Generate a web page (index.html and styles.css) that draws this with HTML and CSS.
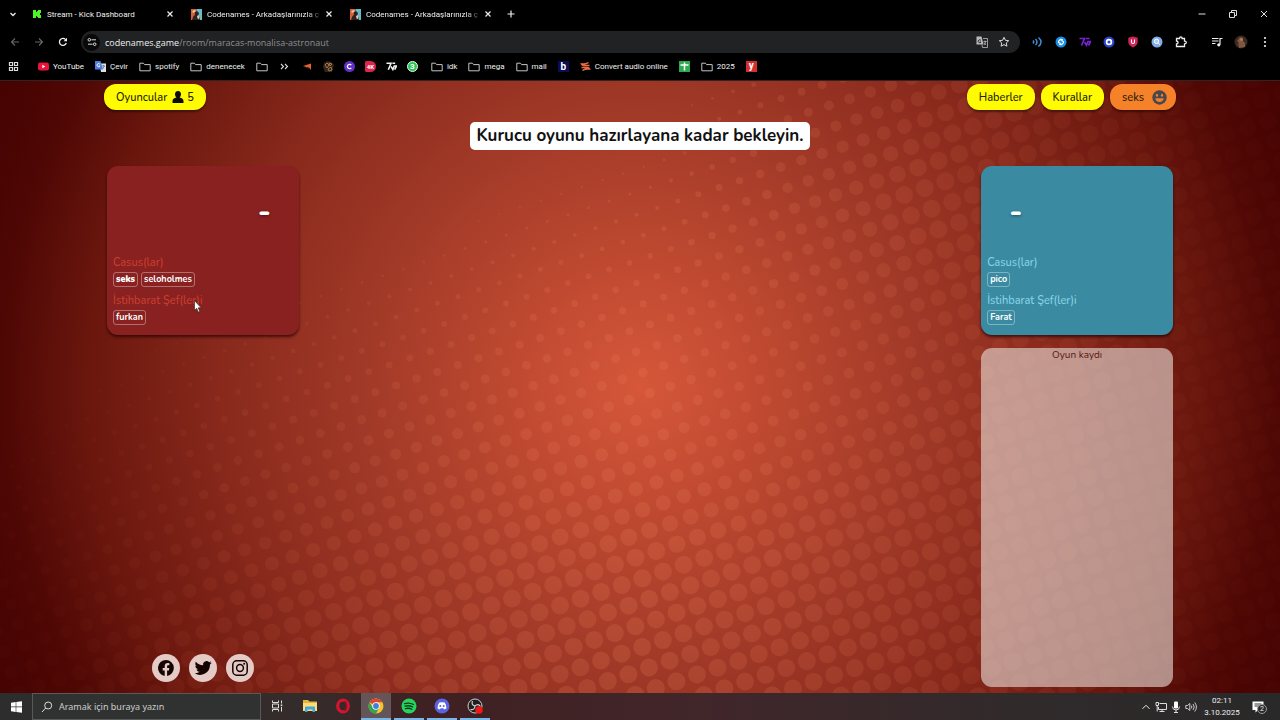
FILE: index.html
```
<!DOCTYPE html>
<html lang="tr">
<head>
  <meta charset="UTF-8" />
  <title>Codenames - Arkadaşlarınızla çevrimiçi oynayın</title>
  <link rel="stylesheet" href="styles.css">
</head>
<body>
  <!-- Shared icons -->
  <svg width="0" height="0" class="defs" aria-hidden="true">
    <symbol id="folder" viewBox="0 0 12 12"><path d="M.8 2.2h3.6l1.2 1.4h5.6v6.2H.8z" fill="none" stroke="#c4c4c4" stroke-linejoin="round"/></symbol>
    <symbol id="close" viewBox="0 0 10 10"><path d="M2.5 2.5l5 5m0-5l-5 5" fill="none" stroke="#eee" stroke-width="1.2"/></symbol>
    <symbol id="agents" viewBox="0 0 11 11">
      <path d="M0 0h5.5v11H0z" fill="#d8603c"/><path d="M5.500 0H11v11H5.500z" fill="#67bccb"/>
      <path d="M1 11l1.500-4L4 6 3.500 3.500 6 2l2 2-.5 2L9 11z" fill="#302020"/>
      <path d="M1 3l2-2 2 .5-2 2.500zM6 7l2-1v4l-1.500-.5z" fill="#f0c890"/>
    </symbol>
  </svg>

  <header class="browser">
    <div class="tabs">
      <button class="tabMenu" aria-label="Sekmelerde ara"><svg width="10" height="10" viewBox="0 0 10 10"><path d="M2.5 4L5 6.5 7.5 4" fill="none" stroke="#eee" stroke-width="1.3"/></svg></button>
      <div class="tab">
        <svg width="10" height="10" viewBox="0 0 10 10"><path d="M1 1h3v2h1V2h1V1h3v3H8v2h1v3H6V8H5V7H4v2H1z" fill="#4df527"/></svg>
        <span class="tabTitle">Stream - Kick Dashboard</span>
        <button aria-label="Kapat"><svg width="10" height="10"><use href="#close"/></svg></button>
      </div>
      <div class="tab">
        <svg width="11" height="11"><use href="#agents"/></svg>
        <span class="tabTitle fade">Codenames - Arkadaşlarınızla ç</span>
        <button aria-label="Kapat"><svg width="10" height="10"><use href="#close"/></svg></button>
      </div>
      <div class="tab">
        <svg width="11" height="11"><use href="#agents"/></svg>
        <span class="tabTitle fade">Codenames - Arkadaşlarınızla ç</span>
        <button aria-label="Kapat"><svg width="10" height="10"><use href="#close"/></svg></button>
      </div>
      <button class="newTab" aria-label="Yeni sekme"><svg width="10" height="10" viewBox="0 0 10 10"><path d="M5 1.5v7M1.5 5h7" stroke="#eee" stroke-width="1.2"/></svg></button>
      <div class="windowButtons">
        <button aria-label="Küçült"><svg width="10" height="10" viewBox="0 0 10 10"><path d="M1.5 5h7" stroke="#ddd"/></svg></button>
        <button aria-label="Önceki boyut"><svg width="10" height="10" viewBox="0 0 10 10"><path d="M1.5 3.5h5v5h-5zM3.5 3V1.5h5v5H7" fill="none" stroke="#ddd"/></svg></button>
        <button aria-label="Pencereyi kapat"><svg width="10" height="10" viewBox="0 0 10 10"><path d="M2 2l6 6m0-6L2 8" stroke="#ddd"/></svg></button>
      </div>
    </div>

    <div class="toolbar">
      <div class="nav">
        <button aria-label="Geri"><svg width="10" height="10" viewBox="0 0 10 10"><path d="M9 5H1.5M5 1.5L1.5 5 5 8.5" fill="none" stroke="#686868" stroke-width="1.1"/></svg></button>
        <button aria-label="İleri"><svg width="10" height="10" viewBox="0 0 10 10"><path d="M1 5h7.500M5 1.500L8.500 5 5 8.500" fill="none" stroke="#686868" stroke-width="1.1"/></svg></button>
        <button aria-label="Yenile"><svg width="10" height="10" viewBox="0 0 10 10"><path d="M8.300 6A3.500 3.500 0 1 1 7.600 2.600" fill="none" stroke="#eee" stroke-width="1.3"/><path d="M9 .8v3.400H5.600z" fill="#eee"/></svg></button>
      </div>
      <div class="address">
        <span class="siteInfo"><svg width="10" height="10" viewBox="0 0 10 10"><g fill="none" stroke="#ddd"><circle cx="2.300" cy="2.800" r="1.300"/><path d="M4.500 2.800h4.500M1 7.200h4.500"/><circle cx="7.700" cy="7.200" r="1.300"/></g></svg></span>
        <a href="#" class="url"><b>codenames.game</b>/room/maracas-monalisa-astronaut</a>
        <button aria-label="Çevir"><svg width="12" height="12" viewBox="0 0 12 12"><path d="M.5.5h5l2 8h-7z" fill="#bbb"/><path d="M5 4.500A1.500 1.500 0 1 0 5 6H3.800" fill="none" stroke="#222" stroke-width=".9"/><path d="M7 2.500h4.500v9h-5L6 9M7.500 5.500h3M9 4.500v1M8 9l2-3.500M8 6.500L10 9" fill="none" stroke="#bbb" stroke-width=".8"/></svg></button>
        <button aria-label="Yer işareti ekle"><svg width="12" height="12" viewBox="0 0 12 12"><path d="M6 1.300l1.400 3 3.300.4-2.400 2.200.6 3.300L6 8.600l-2.900 1.600.6-3.300L1.300 4.700l3.300-.4z" fill="none" stroke="#ddd"/></svg></button>
      </div>
      <div class="extensions">
        <button aria-label="Ses"><svg width="12" height="12" viewBox="0 0 12 12"><path d="M2 4.500q1.500 1.500 0 3M4.500 3q3 3 0 6M7.500 1.500q5 4.500 0 9" fill="none" stroke="#3c8fd6" stroke-width="1.500"/></svg></button>
        <button aria-label="Shazam"><svg width="12" height="12" viewBox="0 0 12 12"><circle cx="6" cy="6" r="5.500" fill="#1a90e8"/><path d="M7.800 3.800Q6 2.800 4.300 4.400T4.500 7L6 7.500M4.200 8.200Q6 9.200 7.700 7.600T7.500 5L6 4.500" fill="none" stroke="#fff" stroke-width="1.300"/></svg></button>
        <button aria-label="7TV"><svg width="12" height="12" viewBox="0 0 12 12"><path d="M.5 2.500h5L2.500 9.500M7 2.500h3.500M5.500 6l2 3.200L9 5.500h2.500L9.500 9.500" fill="none" stroke="#7a22d8" stroke-width="1.700"/></svg></button>
        <button aria-label="Kayıt"><svg width="12" height="12" viewBox="0 0 12 12"><circle cx="6" cy="6" r="5.500" fill="#2b44c9"/><circle cx="6" cy="6" r="2.400" fill="none" stroke="#fff" stroke-width="1.700"/></svg></button>
        <button aria-label="Koruma"><svg width="12" height="12" viewBox="0 0 12 12"><path d="M6 .5l4.700 1.300v4Q10.700 9.500 6 11.500 1.300 9.500 1.300 5.800v-4z" fill="#cf265c"/><path d="M4.500 3.500V6a1.500 1.500 0 0 0 3 0V3.500" fill="none" stroke="#fff" stroke-width="1.100"/></svg></button>
        <button aria-label="Arama"><svg width="12" height="12" viewBox="0 0 12 12"><circle cx="6" cy="6" r="5.500" fill="#80aee9"/><circle cx="5.500" cy="5.300" r="2.200" fill="#acccf5" stroke="#fff"/><path d="M7.200 7l1.800 1.800" stroke="#fff"/></svg></button>
        <button aria-label="Uzantılar"><svg width="12" height="12" viewBox="0 0 12 12"><path d="M1.500 2.500h3q0-1.500 1.300-1.500t1.300 1.500h2.400v2.700q1.800 0 1.800 1.300T9.500 7.800v2.700h-8V8Q3 8 3 6.500T1.500 5z" fill="none" stroke="#eee" stroke-width="1.300"/></svg></button>
        <button class="media" aria-label="Medya"><svg width="12" height="12" viewBox="0 0 12 12"><path d="M1 2.500h6.500M1 5h6.500M1 7.500h3.500M9 8.500v-6h2.500" fill="none" stroke="#eee" stroke-width="1.200"/><circle cx="7.800" cy="8.800" r="1.600" fill="#eee"/></svg></button>
        <button aria-label="Profil"><svg width="14" height="14" viewBox="0 0 14 14"><circle cx="7" cy="7" r="6.500" fill="#3b2a22"/><path d="M5 13V8L3 6l3-4 3 1v3l2 2v4z" fill="#80583f"/><circle cx="7.500" cy="4.500" r="1.500" fill="#a77c60"/><path d="M3 9l2-1v4z" fill="#73382e"/></svg></button>
        <button aria-label="Menü"><svg width="12" height="12" viewBox="0 0 12 12" fill="#eee"><circle cx="6" cy="2" r="1.100"/><circle cx="6" cy="6" r="1.100"/><circle cx="6" cy="10" r="1.100"/></svg></button>
      </div>
    </div>

    <nav class="bookmarks">
      <button class="apps" aria-label="Uygulamalar"><svg width="11" height="11" viewBox="0 0 11 11"><path d="M1.500 1.500h3v3h-3zM6.500 1.500h3v3h-3zM1.500 6.500h3v3h-3zM6.500 6.500h3v3h-3z" fill="none" stroke="#ddd" stroke-width="1.200"/></svg></button>
      <a href="#"><svg width="11" height="11" viewBox="0 0 11 11"><rect y="1.500" width="11" height="8" rx="2" fill="#e8143c"/><path d="M4.300 3.800v3.400L7.300 5.500z" fill="#fff"/></svg>YouTube</a>
      <a href="#"><svg width="11" height="11" viewBox="0 0 11 11"><path d="M4.500 2.500H11V11H6z" fill="#dde1e6"/><path d="M0 0h5.500L8 8.500H0z" fill="#4c7ee0"/><path d="M5 3.300A1.600 1.600 0 1 0 5 5H3.600" fill="none" stroke="#fff" stroke-width=".9"/><path d="M7 5h3M8.500 4v1M7.500 8l2-3" stroke="#667" stroke-width=".8"/></svg>Çevir</a>
      <a href="#"><svg width="12" height="12"><use href="#folder"/></svg>spotify</a>
      <a href="#"><svg width="12" height="12"><use href="#folder"/></svg>denenecek</a>
      <a href="#" aria-label="Klasör"><svg width="12" height="12"><use href="#folder"/></svg></a>
      <a href="#" aria-label="Diğer"><svg width="11" height="11" viewBox="0 0 11 11"><path d="M2 3l2.500 2.500L2 8M6 3l2.500 2.500L6 8" fill="none" stroke="#ddd" stroke-width="1.100"/></svg></a>
      <div class="iconLinks">
        <a href="#" aria-label="Ok"><svg width="11" height="11" viewBox="0 0 11 11"><path d="M1 5l8-2.500V9L7.500 7z" fill="#e2632b"/><path d="M2 6h4l1 2z" fill="#402015"/></svg></a>
        <a href="#" aria-label="Harita"><svg width="11" height="11" viewBox="0 0 11 11"><path d="M1 2l3-2 4 1 3 3-2 7H2L0 6z" fill="#33251c"/><path d="M2 4l2-2 2 2-2 3zM6 2l3 1-2 2zM5 8l3-2 1 3-3 1z" fill="none" stroke="#a37844"/></svg></a>
        <a href="#" aria-label="C"><svg width="11" height="11" viewBox="0 0 11 11"><circle cx="5.500" cy="5.500" r="5.500" fill="#6030c8"/><path d="M7.300 4.100a2.200 2.200 0 1 0 0 2.800" fill="none" stroke="#fff" stroke-width="1.300"/></svg></a>
        <a href="#" class="badge4k"><span>4K</span></a>
        <a href="#" aria-label="7TV"><svg width="11" height="11" viewBox="0 0 12 12"><path d="M.5 2.500h5L2.500 9.500M7 2.500h3M5.500 6l2 3.200L9 5.500h2.500L9.500 9.500" fill="none" stroke="#f3f3f3" stroke-width="1.700"/></svg></a>
        <a href="#" class="whatsapp"><span>3</span></a>
      </div>
      <a href="#"><svg width="12" height="12"><use href="#folder"/></svg>idk</a>
      <a href="#"><svg width="12" height="12"><use href="#folder"/></svg>mega</a>
      <a href="#"><svg width="12" height="12"><use href="#folder"/></svg>mail</a>
      <a href="#" class="letterB"><span>b</span></a>
      <a href="#"><svg width="11" height="11" viewBox="0 0 11 11"><path d="M9.500 4.500H4Q2 4.500 1.500 3 6 3.500 8.500 1.500M1.500 6.500H7q2 0 2.500 1.500Q5 7.500 2.500 9.500" fill="none" stroke="#eb6d43" stroke-width="1.600"/></svg>Convert audio online</a>
      <a href="#" aria-label="E-Tablolar"><svg width="11" height="11" viewBox="0 0 11 11"><path d="M0 0h11v11H0z" fill="#2da94f"/><path d="M1.500 4h8M5.500 1.500v8" stroke="#fff" stroke-width="1.500"/></svg></a>
      <a href="#"><svg width="12" height="12"><use href="#folder"/></svg>2025</a>
      <a href="#" class="letterY"><span>y</span></a>
    </nav>
  </header>

  <main class="game">
    <svg id="dots" viewBox="0 0 1280 613" preserveAspectRatio="xMidYMid slice" aria-hidden="true"></svg>

    <div class="room">
      <div class="topBar">
        <button class="pill">Oyuncular
          <svg width="12" height="12" viewBox="0 0 12 12"><path d="M6 0c2 0 3 1.400 3 3.200C9 4.800 8.200 6 7.500 6.500c2.500.5 4 1.500 4 3.500v2H.5v-2c0-2 1.500-3 4-3.500C3.800 6 3 4.800 3 3.200 3 1.400 4 0 6 0z" fill="#0d0c04"/></svg>
          <span>5</span>
        </button>
        <div class="topRight">
          <button class="pill">Haberler</button>
          <button class="pill">Kurallar</button>
          <button class="pill user">seks
            <svg width="15" height="15" viewBox="0 0 15 15"><circle cx="7.500" cy="7.500" r="7.200" fill="#48484c"/><path d="M3.300 8.200h8.400q-.7 3.800-4.200 3.800T3.300 8.200z" fill="#f08030"/><ellipse cx="5" cy="5.300" rx="1.100" ry="1.500" fill="#f08030"/><ellipse cx="10" cy="5.300" rx="1.100" ry="1.500" fill="#f08030"/></svg>
          </button>
        </div>
      </div>

      <h1>Kurucu oyunu hazırlayana kadar bekleyin.</h1>

      <div class="board">
        <div class="column">
          <section class="team red">
            <div class="score">-</div>
            <h2>Casus(lar)</h2>
            <div class="players"><span class="player me">seks</span><span class="player">seloholmes</span></div>
            <h2>İstihbarat Şef(ler)i</h2>
            <div class="players"><span class="player">furkan</span></div>
            <svg class="cursor" width="8" height="13" viewBox="0 0 8 13"><path d="M.5.7v9.600l2.200-2 1.500 3.800 1.600-.7-1.600-3.600h3z" fill="#fff" stroke="#222" stroke-width=".6"/></svg>
          </section>
          <div class="social">
            <a href="#" aria-label="Facebook"><svg width="18" height="18" viewBox="0 0 18 18"><path d="M9 1a8 8 0 0 0-1.300 15.900v-5.500h-2V9h2V7.200c0-2.100 1.200-3.200 3-3.200.9 0 1.700.2 1.700.2v2h-1c-1 0-1.300.6-1.300 1.200V9h2.200l-.4 2.400h-1.800v5.500A8 8 0 0 0 9 1z" fill="#140503"/></svg></a>
            <a href="#" aria-label="Twitter"><svg width="18" height="18" viewBox="0 0 24 24"><path d="M23.600 4.900c-.8.400-1.700.6-2.600.7 1-.6 1.700-1.500 2-2.500-.9.500-1.900.9-2.900 1.100a4.700 4.700 0 0 0-8 4.200C8.200 8.200 4.800 6.400 2.500 3.500a4.700 4.700 0 0 0 1.400 6.200c-.7 0-1.500-.2-2.100-.6 0 2.200 1.600 4.200 3.700 4.700-.7.200-1.400.2-2.100.1.600 1.800 2.300 3.200 4.400 3.200A9.400 9.400 0 0 1 .9 19 13.300 13.300 0 0 0 21.300 7.200c.9-.6 1.700-1.400 2.300-2.300z" fill="#140503"/></svg></a>
            <a href="#" aria-label="Instagram"><svg width="18" height="18" viewBox="0 0 18 18"><g fill="none" stroke="#140503" stroke-width="1.500"><rect x="1.800" y="1.800" width="14.400" height="14.400" rx="4"/><circle cx="9" cy="9" r="3.400"/></g><circle cx="13.200" cy="4.800" r="1" fill="#140503"/></svg></a>
          </div>
        </div>

        <div class="column">
          <section class="team blue">
            <div class="score">-</div>
            <h2>Casus(lar)</h2>
            <div class="players"><span class="player">pico</span></div>
            <h2>İstihbarat Şef(ler)i</h2>
            <div class="players"><span class="player">Farat</span></div>
          </section>
          <section class="log">Oyun kaydı</section>
        </div>
      </div>
    </div>
  </main>

  <footer class="taskbar">
    <button class="start" aria-label="Başlat"><svg width="11" height="12" viewBox="0 0 11 12"><path d="M0 1.800l4.700-.7v4.500H0zM5.300 1L11 .2v5.400H5.300zM0 6.300h4.700v4.600L0 10.200zM5.300 6.300H11v5.500L5.300 11z" fill="#fff"/></svg></button>
    <label class="search">
      <svg width="12" height="12" viewBox="0 0 12 12"><circle cx="7.200" cy="4.500" r="3.500" fill="none" stroke="#ddd"/><path d="M4.700 7L1 11" stroke="#ddd"/></svg>
      <input type="text" placeholder="Aramak için buraya yazın" aria-label="Aramak için buraya yazın" />
    </label>
    <div class="pinned">
      <button aria-label="Görev görünümü"><svg width="12" height="12" viewBox="0 0 12 12"><path d="M1.500.5v2h6v-2M1.500 11.500v-2h6v2M1.500 4h6v4h-6zM10.500.5v3M10.500 7v4.500" fill="none" stroke="#ddd"/><path d="M9.700 4.500h1.600v1.700H9.700z" fill="#ddd"/></svg></button>
      <button aria-label="Dosya Gezgini"><svg width="16" height="16" viewBox="0 0 16 16"><path d="M1 2h5l1.500 1.500H15V13H1z" fill="#e6b43c"/><path d="M1 5h14v8H1z" fill="#fbdc78"/><path d="M3 14V9.500q0-1 1-1h8q1 0 1 1V14h-2.500v-2.500h-5V14z" fill="#46a5d8"/></svg></button>
      <button aria-label="Opera"><svg width="16" height="16" viewBox="0 0 16 16"><ellipse cx="8" cy="8" rx="5.300" ry="5.800" fill="none" stroke="#d6142f" stroke-width="3.200"/><path d="M10 3q3 5 0 10" fill="none" stroke="#8c1224" stroke-width="1.500"/></svg></button>
      <button class="running active" aria-label="Chrome"><svg width="16" height="16" viewBox="0 0 16 16"><circle cx="8" cy="8" r="7.500" fill="#f6c52c"/><path d="M8 8L1.500 4.250A7.500 7.500 0 0 1 14.500 4.250H8z" fill="#df4534"/><path d="M1.500 4.250A7.500 7.500 0 0 0 8 15.500l3.200-5.600H5z" fill="#30a552"/><circle cx="8" cy="8" r="3.700" fill="#fff"/><circle cx="8" cy="8" r="2.900" fill="#3f7ee8"/></svg></button>
      <button class="running" aria-label="Spotify"><svg width="16" height="16" viewBox="0 0 16 16"><circle cx="8" cy="8" r="7.500" fill="#24d45f"/><path d="M3.500 5.600q5-1.400 9 .9M4 8.200q4.300-1.200 7.700.8M4.500 10.600q3.600-.9 6.300.7" fill="none" stroke="#10371d" stroke-width="1.300" stroke-linecap="round"/></svg></button>
      <button class="running" aria-label="Discord"><svg width="16" height="16" viewBox="0 0 16 16"><circle cx="8" cy="8" r="7.500" fill="#5864e0"/><path d="M5.300 4.600q2.700-.8 5.400 0 1.800 2.600 1.800 5.600-1 .9-2.400 1.200l-.7-1.100H6.600l-.7 1.100q-1.400-.3-2.400-1.200 0-3 1.800-5.600z" fill="#fff"/><circle cx="6.300" cy="8" r="1" fill="#5864e0"/><circle cx="9.700" cy="8" r="1" fill="#5864e0"/></svg></button>
      <button class="running" aria-label="OBS"><svg width="16" height="16" viewBox="0 0 16 16"><circle cx="8" cy="8" r="7" fill="#211e20" stroke="#cfcfcf"/><path d="M8 8Q4 7 5.500 3M8 8q3-3 5.500.5M8 8q-.500 4.500-4.500 3.500" fill="none" stroke="#cfcfcf" stroke-width="1.200"/><circle cx="12" cy="12" r="3.800" fill="#f01818"/></svg></button>
    </div>
    <div class="tray">
      <svg width="10" height="10" viewBox="0 0 10 10"><path d="M1.500 6.800L5 3.300l3.500 3.500" fill="none" stroke="#eee"/></svg>
      <svg width="12" height="12" viewBox="0 0 12 12"><path d="M4.500 2.500h7v6h-8V6M7 8.500v2M4.500 10.500h5M1 1.500h2.500v3H1zM2.200 4.500v6" fill="none" stroke="#ddd"/></svg>
      <svg width="10" height="12" viewBox="0 0 10 12"><rect x="3" y=".5" width="4" height="7" rx="1" fill="#fff"/><path d="M1.500 5.500Q1.500 9 5 9t3.500-3.500M5 9v2.500M3 11.500h4" fill="none" stroke="#ddd"/></svg>
      <svg width="12" height="12" viewBox="0 0 12 12"><path d="M.8 4.500h1.700l2.300-2v7l-2.300-2H.8zM6.300 4.500q1.200 1.500 0 3M8 3q2.500 3 0 6M9.700 1.500q3.500 4.500 0 9" fill="none" stroke="#ddd" stroke-width=".9"/></svg>
      <div class="clock"><span>02:11</span><span>3.10.2025</span></div>
      <button class="notes" aria-label="Bildirimler"><svg width="12" height="12" viewBox="0 0 12 12"><path d="M.5.500h11v8.500H6L3.500 11.500V9h-3z" fill="#fff"/><path d="M2.500 3h7M2.500 5h7" stroke="#333"/></svg><span>2</span></button>
    </div>
  </footer>

  <script>
    const dots = document.getElementById('dots');

    // Dots grow towards the bottom and the right edge, and shrink near the glow
    function dotRadius(x, y) {
      let r = 3 + 0.009 * (x - 440) + 0.023 * (y - 240);
      const upper = Math.min(1, Math.max(0, (270 - y) / 150));
      r += Math.max(0, x - 650) * 0.02 * upper;
      r -= 3 * Math.exp(-((x - 810) ** 2 + (y - 370) ** 2) / 40000);
      return Math.min(9, r);
    }

    for (let i = -50; i < 50; i++) {
      for (let j = -50; j < 50; j++) {
        const x = 574 + i * 20.6 + j * 6.8;
        const y = 429 - i * 6.8 + j * 20.6;
        const r = dotRadius(x, y);
        if (r < 1 || x < -10 || x > 1290 || y < -10 || y > 623) continue;
        const dot = document.createElementNS('http://www.w3.org/2000/svg', 'circle');
        dot.setAttribute('cx', x.toFixed(1));
        dot.setAttribute('cy', y.toFixed(1));
        dot.setAttribute('r', r.toFixed(1));
        dot.setAttribute('opacity', Math.max(0.1, 1 - Math.abs(x - 640) / 640).toFixed(2));
        dots.appendChild(dot);
      }
    }
  </script>
</body>
</html>
```
FILE: styles.css
```
* {
  box-sizing: border-box;
}

body {
  margin: 0;
  min-height: 100vh;
  display: flex;
  flex-direction: column;
  background-color: #000;
  color: #f0f0f0;
  font-family: "Segoe UI", Roboto, sans-serif;
  font-size: 8px;
}

svg {
  flex: none;
  display: block;
}

button {
  font: inherit;
  color: inherit;
  background: none;
  border: none;
  padding: 0;
  cursor: pointer;
}

a {
  color: inherit;
  text-decoration: none;
}

.defs {
  position: absolute;
}

/* Browser */
.tabs {
  display: flex;
  align-items: center;
  height: 28px;
}

.tabMenu {
  display: grid;
  place-items: center;
  width: 25px;
}

.tab {
  display: flex;
  align-items: center;
  gap: 5px;
  width: 159px;
  padding: 0 9px 0 7px;
}

.tabTitle {
  flex: 1;
  overflow: hidden;
  white-space: nowrap;
}

.fade {
  mask-image: linear-gradient(to right, #000 100px, transparent 116px);
}

.newTab {
  margin-left: 4px;
}

.windowButtons {
  display: flex;
  gap: 21px;
  margin-left: auto;
  padding-right: 11px;
}

.toolbar {
  display: flex;
  align-items: center;
  height: 28px;
}

.nav {
  display: flex;
  gap: 14px;
  padding: 0 13px 0 10px;
}

.address {
  flex: 1;
  display: flex;
  align-items: center;
  gap: 10px;
  height: 22px;
  padding: 0 10px 0 2px;
  border-radius: 11px;
  background-color: #202224;
}

.siteInfo {
  display: grid;
  place-items: center;
  width: 17px;
  height: 17px;
  border-radius: 50%;
  background-color: #090909;
}

.url {
  flex: 1;
  margin-left: -5px;
  font-family: "Segoe UI", "Open Sans", sans-serif;
  font-size: 9px;
  color: #8c8f92;
}

.url b {
  font-weight: 500;
  color: #f0f0f0;
}

.extensions {
  display: flex;
  padding: 0 3px 0 5px;
}

.extensions button {
  display: grid;
  place-items: center;
  width: 24px;
}

.extensions .media {
  margin-left: 12px;
}

.bookmarks {
  display: flex;
  align-items: center;
  gap: 11px;
  height: 24px;
  padding: 0 8px 3px;
}

.bookmarks a {
  display: flex;
  align-items: center;
  gap: 4px;
  white-space: nowrap;
}

.bookmarks .apps {
  margin-right: 8px;
}

.iconLinks {
  display: flex;
  gap: 10px;
  padding: 0 2px 0 1px;
}

.badge4k span,
.whatsapp span,
.letterB span,
.letterY span {
  width: 11px;
  height: 11px;
  line-height: 11px;
  text-align: center;
  font-weight: bold;
  color: #fff;
}

.badge4k span {
  font-size: 6px;
  background-color: #df244d;
  border-radius: 2px 6px 6px 2px;
}

.whatsapp span {
  background-color: #2ac653;
  border: 1px solid #e8f8ec;
  border-radius: 50%;
  line-height: 9px;
}

.letterB span {
  background-color: #0c0b55;
  font-size: 10px;
}

.letterY span {
  background-color: #d52e2e;
  font-size: 10px;
  line-height: 9px;
}

/* Game */
.game {
  position: relative;
  flex: 1;
  display: flex;
  border-top: 1px solid #38201e;
  background: radial-gradient(circle at 50% 50%, #d6573a 0, #c04a31 120px, #a23a28 270px, #88291c 420px, #6b170e 550px, #4e0704 640px, #430201 720px);
  font-family: Nunito, "Open Sans", sans-serif;
}

#dots {
  position: absolute;
  inset: 0;
  width: 100%;
  height: 100%;
  fill: rgba(236, 128, 92, 0.21);
}

.room {
  position: relative;
  flex: 1;
  display: flex;
  flex-direction: column;
  max-width: 1072px;
  margin: 0 auto;
  padding: 3px 0 6px;
}

.topBar,
.topRight {
  display: flex;
  justify-content: space-between;
  gap: 6px;
}

.pill {
  display: flex;
  align-items: center;
  gap: 5px;
  height: 26px;
  padding: 0 12px;
  border-radius: 12px;
  background-color: #fffb00;
  box-shadow: 0 2px 2px rgba(0, 0, 0, 0.4);
  color: #23200a;
  font-size: 11px;
  font-weight: 500;
}

.pill span {
  margin-left: -2px;
}

.user {
  gap: 8px;
  padding: 0 9px 0 12px;
  background-color: #f58229;
}

h1 {
  align-self: center;
  margin: 12px 0 16px;
  padding: 0 6px;
  border-radius: 5px;
  background-color: #fff;
  color: #111;
  font-size: 17px;
  font-weight: 700;
  line-height: 28px;
}

.board {
  flex: 1;
  display: flex;
  justify-content: space-between;
  padding: 0 3px;
}

.column {
  display: flex;
  flex-direction: column;
  gap: 13px;
  width: 18%;
}

.team {
  position: relative;
  display: flex;
  flex-direction: column;
  padding: 24px 6px 10px;
  border-radius: 11px;
  box-shadow: 0 2px 3px rgba(30, 0, 0, 0.7);
}

.red {
  background-color: #88211f;
}

.blue {
  background-color: #3a8aa2;
}

.score {
  height: 65px;
  padding: 0 22px;
  color: #fff;
  font-size: 30px;
  font-weight: 800;
  line-height: 44px;
  text-shadow: 0 1px 3px rgba(0, 0, 0, 0.4);
}

.red .score {
  text-align: right;
}

.team h2 {
  margin: 0 0 1px;
  font-size: 11px;
  font-weight: 500;
  line-height: 16px;
}

.red h2 {
  color: #c93e31;
}

.blue h2 {
  color: #88d2e6;
}

.players {
  display: flex;
  gap: 3px;
}

.players + h2 {
  margin-top: 6px;
}

.player {
  padding: 0 2px;
  border: 1px solid rgba(255, 255, 255, 0.35);
  border-radius: 3px;
  color: #fff;
  font-size: 9px;
  font-weight: 700;
  line-height: 13px;
}

.me {
  font-weight: 900;
}

.cursor {
  position: absolute;
  left: 87px;
  top: 134px;
}

.log {
  flex: 1;
  border-radius: 11px;
  background-color: rgba(225, 210, 205, 0.65);
  color: #561712;
  font-size: 10px;
  line-height: 15px;
  text-align: center;
}

.social {
  display: flex;
  justify-content: center;
  gap: 9px;
  margin: auto 0 5px;
}

.social a {
  display: grid;
  place-items: center;
  width: 28px;
  height: 28px;
  border-radius: 50%;
  background-color: #e5cbc6;
}

/* Taskbar */
.taskbar {
  display: flex;
  align-items: stretch;
  height: 27px;
  background: linear-gradient(to right, #2d2d2d 0, #342c2b 24%, #402022 34%, #41262a 55%, #302a2b 80%, #292929);
}

.start {
  display: grid;
  place-items: center;
  width: 32px;
}

.search {
  display: flex;
  align-items: center;
  gap: 6px;
  width: 229px;
  padding: 0 8px;
  border: 1px solid #595959;
  background-color: #303231;
}

.search input {
  flex: 1;
  min-width: 0;
  padding: 0;
  border: none;
  outline: none;
  background: none;
  color: #ddd;
  font-family: "Segoe UI", "Noto Sans", sans-serif;
  font-size: 9px;
}

.search input::placeholder {
  color: #ccc;
}

.pinned {
  display: flex;
  gap: 3px;
  padding-left: 1px;
}

.pinned button {
  display: grid;
  place-items: center;
  width: 30px;
  border-bottom: 2px solid transparent;
}

.pinned .running {
  border-color: #78b7e8;
}

.pinned .active {
  background-color: #635558;
}

.tray {
  display: flex;
  align-items: center;
  gap: 4px;
  margin-left: auto;
  padding-right: 10px;
}

.clock {
  display: flex;
  flex-direction: column;
  align-items: center;
  width: 38px;
  margin-left: 2px;
  line-height: 12px;
}

.notes {
  position: relative;
  margin-left: 7px;
  padding-right: 6px;
}

.notes span {
  position: absolute;
  left: 5px;
  top: 3px;
  width: 10px;
  height: 10px;
  border: 1px solid #999;
  border-radius: 50%;
  background-color: #2b2b2b;
  font-size: 7px;
  line-height: 8px;
}
```
